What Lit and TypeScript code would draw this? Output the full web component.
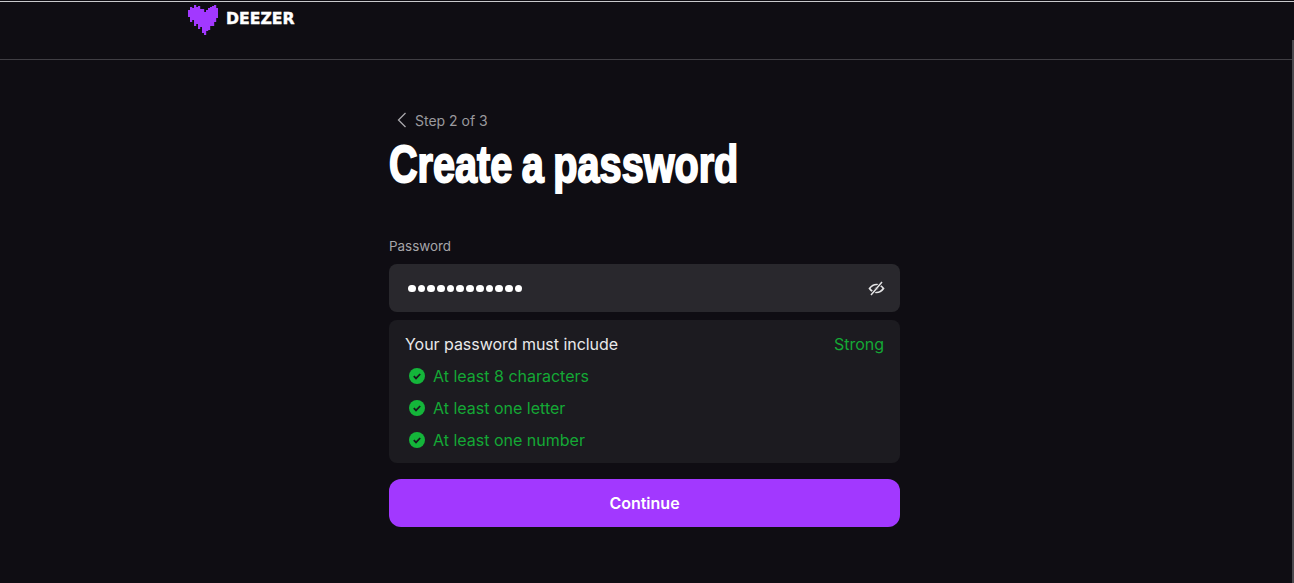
import { LitElement, html, css, svg } from "lit";
import { customElement } from "lit/decorators.js";

const check = html`<svg class="chk" viewBox="0 0 16 16"><circle cx="8" cy="8" r="8" fill="#14b53a"></circle><path d="M4.800 8.200l2.200 2.200 4.200-4.400" fill="none" stroke="#17171d" stroke-width="1.800"></path></svg>`;

const heartTops = [10, 7, 8, 5, 7, 6, 9, 9, 12, 10, 8, 7, 6, 5, 8];
const heartBottoms = [17, 22, 20, 26, 24, 29, 27, 33, 35, 31, 30, 26, 26, 22, 18];

@customElement("app-root")
export class AppRoot extends LitElement {
  static styles = css`
    :host { display: block; width: 1294px; height: 583px; background: #0f0d13; font-family: Inter, "Liberation Sans", sans-serif; overflow: hidden; position: relative; }
    .topline { border-top: 1px solid #0f0d13; height: 1px; background: #c9c9cc; }
    header { height: 57px; border-bottom: 1px solid #403e44; padding-left: 188px; display: flex; align-items: flex-start; gap: 8px; }
    .heart { width: 30px; height: 36px; }
    .brand { font: 700 15.700px/1 "DejaVu Sans", sans-serif; color: #fff; margin-top: 9px; -webkit-text-stroke: 0.400px #fff; }
    main { width: 511px; margin-left: 389px; }
    .step { display: flex; align-items: center; gap: 8px; height: 20px; margin-top: 50px; padding-left: 8px; color: #9b9a9e; font-size: 14px; }
    .step svg { width: 10px; height: 16px; }
    h1 { margin: 4px 0 0; font: 700 52px/60px "Liberation Sans", sans-serif; word-spacing: -2px; color: #fff; -webkit-text-stroke: 2px #fff; transform: scaleX(0.762); transform-origin: left; white-space: nowrap; }
    .lab { margin-top: 42px; font-size: 13.400px; line-height: 20px; color: #a6a5a9; }
    .field { margin-top: 8px; height: 48px; background: #29282d; border-radius: 8px; display: flex; align-items: center; justify-content: space-between; padding: 0 15px 0 19px; }
    .dots { display: flex; gap: 2px; margin-top: 1px; }
    .dots i { width: 7.700px; height: 7.700px; background: #fff; border-radius: 50%; }
    .eye { width: 17px; height: 17px; }
    .box { margin-top: 8px; height: 143px; box-sizing: border-box; background: #1c1b20; border-radius: 8px; padding: 12px 16px 0; }
    .head { display: flex; justify-content: space-between; line-height: 24px; font-size: 16px; color: #e9e9ea; }
    .head span:first-child { letter-spacing: -0.040px; }
    .strong { color: #14a835; }
    .rows { margin-top: 4px; }
    .row { display: flex; align-items: center; gap: 8px; height: 32px; padding-left: 4px; color: #14a835; font-size: 16px; }
    .chk { width: 16px; height: 16px; }
    button { display: block; margin-top: 16px; width: 100%; height: 48px; border: 0; border-radius: 12px; background: #a238ff; color: #fff; font: 600 16px Inter, "Liberation Sans", sans-serif; }
    .scroll { position: absolute; right: 0; top: 40px; bottom: 0; width: 2px; background: #4a494e; }
  `;
  render() {
    return html`
      <div class="topline"></div>
      <header>
        <svg class="heart" viewBox="0 0 30 36">
          ${heartTops.map((t, i) => svg`<rect x=${i * 2} y=${t - 2} width="2.200" height=${heartBottoms[i] - t} fill="#a238ff"></rect>`)}
        </svg>
        <span class="brand">DEEZER</span>
      </header>
      <main>
        <div class="step"><svg viewBox="0 0 10 16"><path d="M8.500 1L1.500 8l7 7" fill="none" stroke="#a9a8ac" stroke-width="1.300"></path></svg>Step 2 of 3</div>
        <h1>Create a password</h1>
        <div class="lab">Password</div>
        <div class="field">
          <div class="dots">${Array.from({ length: 12 }, () => html`<i></i>`)}</div>
          <svg class="eye" viewBox="0 0 17 17"><path d="M1.500 8.500C3.500 5.800 5.800 4.500 8.500 4.500s5 1.300 7 4c-2 2.700-4.300 4-7 4s-5-1.300-7-4z" fill="none" stroke="#e4e4e5" stroke-width="1.700"></path><circle cx="8.500" cy="8.500" r="1.800" fill="#e4e4e5"></circle><path d="M3 15L14 2" stroke="#29282d" stroke-width="3.200"></path><path d="M3 15L14 2" stroke="#e4e4e5" stroke-width="1.500"></path></svg>
        </div>
        <div class="box">
          <div class="head"><span>Your password must include</span><span class="strong">Strong</span></div>
          <div class="rows">
            <div class="row">${check}At least 8 characters</div>
            <div class="row">${check}At least one letter</div>
            <div class="row">${check}At least one number</div>
          </div>
        </div>
        <button>Continue</button>
      </main>
      <div class="scroll"></div>
    `;
  }
}
